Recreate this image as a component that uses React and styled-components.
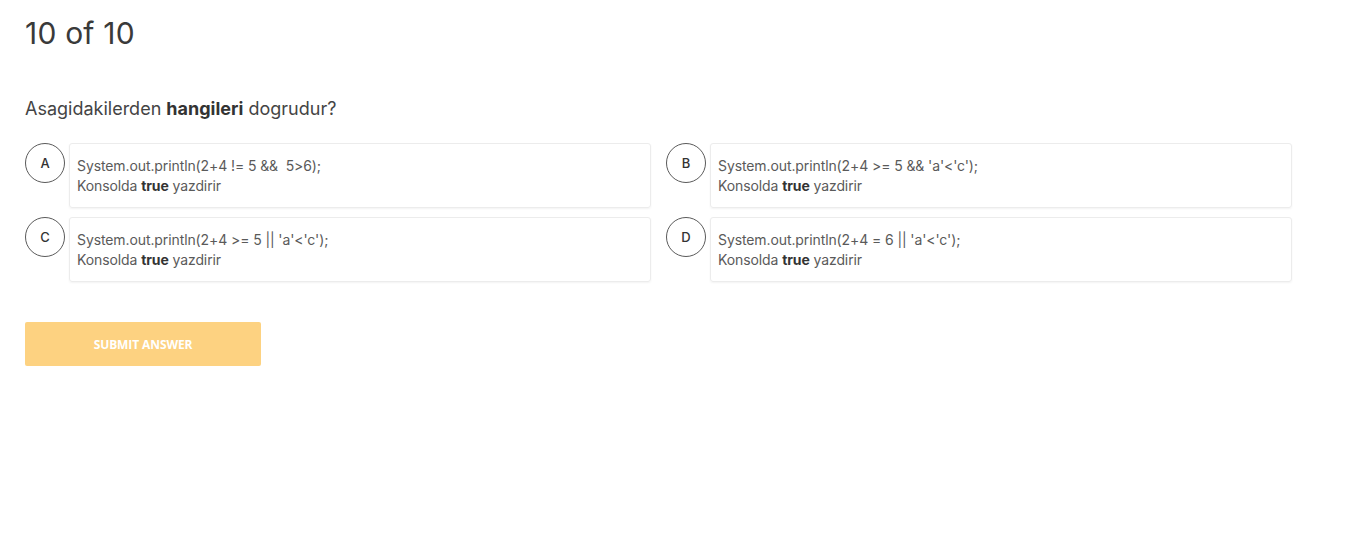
import React from "react";
import styled, { createGlobalStyle } from "styled-components";

const Global = createGlobalStyle`
  html, body { margin: 0; padding: 0; background: #fff; }
  body { font-family: Inter, "Noto Sans", sans-serif; color: #333; }
`;

const Page = styled.div`
  padding: 14px 65px 40px 25px;
  width: 1267px;
`;

const Counter = styled.h1`
  margin: 0;
  font-size: 30px;
  font-weight: 400;
  line-height: 38px;
  color: #3a3a3a;
  letter-spacing: 0.2px;
`;

const Question = styled.p`
  margin: 45px 0 0;
  font-size: 18px;
  line-height: 24px;
  color: #444;
  b { font-weight: 700; color: #333; }
`;

const Grid = styled.div`
  margin-top: 22px;
  display: grid;
  grid-template-columns: 626px 626px;
  column-gap: 15px;
  row-gap: 9px;
`;

const Option = styled.div`
  display: flex;
  align-items: flex-start;
  gap: 4px;
`;

const Letter = styled.div`
  flex: none;
  width: 38px;
  height: 38px;
  border: 1px solid #5a5a5a;
  border-radius: 50%;
  display: flex;
  align-items: center;
  justify-content: center;
  font-size: 13px;
  font-weight: 500;
  color: #333;
`;

const Card = styled.div`
  flex: 1;
  height: 65px;
  box-sizing: border-box;
  padding: 12px 7px;
  border: 1px solid #ececec;
  border-radius: 3px;
  box-shadow: 0 1px 2px rgba(0, 0, 0, 0.05);
  font-size: 14px;
  line-height: 20px;
  color: #5a5a5a;
  letter-spacing: -0.1px;
  b { font-weight: 700; color: #333; }
`;

const CodeLine = styled.div`
  white-space: pre;
`;

const Submit = styled.button`
  margin-top: 40px;
  width: 236px;
  height: 44px;
  border: none;
  border-radius: 2px;
  background: #fdd281;
  color: #fff;
  font-family: "Open Sans", Inter, sans-serif;
  font-size: 12px;
  font-weight: 700;
  letter-spacing: -0.1px;
  text-transform: uppercase;
`;

const options = [
  { l: "A", code: "System.out.println(2+4 != 5 &&  5>6);" },
  { l: "B", code: "System.out.println(2+4 >= 5 && 'a'<'c');" },
  { l: "C", code: "System.out.println(2+4 >= 5 || 'a'<'c');" },
  { l: "D", code: "System.out.println(2+4 = 6 || 'a'<'c');" },
];

export default function App() {
  return (
    <Page>
      <Global />
      <Counter>10 of 10</Counter>
      <Question>
        Asagidakilerden <b>hangileri</b> dogrudur?
      </Question>
      <Grid>
        {options.map((o) => (
          <Option key={o.l}>
            <Letter>{o.l}</Letter>
            <Card>
              <CodeLine>{o.code}</CodeLine>
              <div>
                Konsolda <b>true</b> yazdirir
              </div>
            </Card>
          </Option>
        ))}
      </Grid>
      <Submit>Submit answer</Submit>
    </Page>
  );
}
